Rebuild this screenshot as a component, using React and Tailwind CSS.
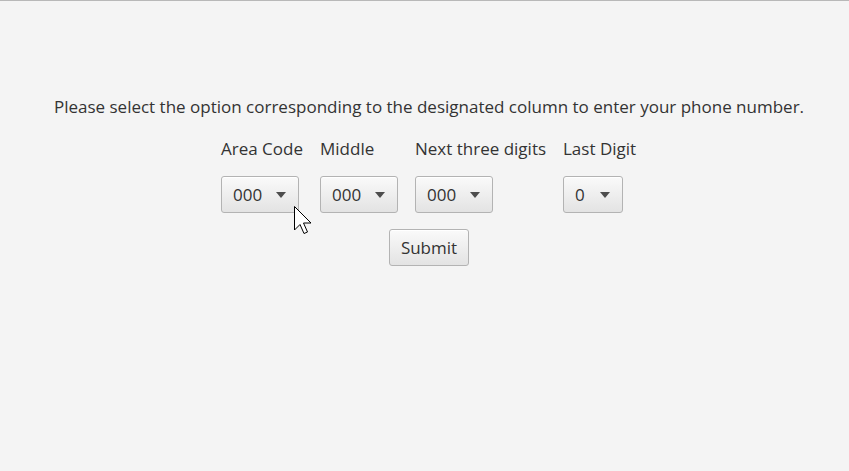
import { useState } from "react";

const columns = [
  { label: "Area Code", options: ["000", "111", "222"], width: "w-[78px]" },
  { label: "Middle", options: ["000", "111", "222"], width: "w-[78px]" },
  { label: "Next three digits", options: ["000", "111", "222"], width: "w-[78px]" },
  { label: "Last Digit", options: ["0", "1", "2"], width: "w-[60px]" },
];

function Combo({ value, width }) {
  return (
    <button
      className={`${width} h-[37px] flex items-center justify-between pl-[11px] pr-[12px] rounded-[3px] border border-[#b3b3b3] bg-gradient-to-b from-[#fafafa] to-[#e3e3e3] shadow-[inset_0_1px_0_#ffffff] text-[17px] text-[#333333]`}
    >
      <span>{value}</span>
      <svg width="10" height="6" viewBox="0 0 10 6">
        <path d="M0 0 L10 0 L5 6 Z" fill="#4d4d4d" />
      </svg>
    </button>
  );
}

export default function App() {
  const [values] = useState(columns.map((c) => c.options[0]));

  return (
    <div className="relative min-h-[471px] bg-[#f4f4f4] border-t border-[#b8b8b8] font-['Open_Sans','Noto_Sans',sans-serif] text-[#333333]">
      <div className="flex flex-col items-center pt-[95px] pl-[9px]">
        <p className="text-[17px] leading-[22px] whitespace-nowrap">
          Please select the option corresponding to the designated column to enter your phone number.
        </p>

        <div className="grid grid-cols-[82px_78px_131px_74px] gap-x-[17px] mt-[20px]">
          {columns.map((c) => (
            <span key={c.label} className="text-[17px] leading-[22px] whitespace-nowrap">
              {c.label}
            </span>
          ))}
          {columns.map((c, i) => (
            <div key={c.label + "-combo"} className="mt-[16px]">
              <Combo value={values[i]} width={c.width} />
            </div>
          ))}
        </div>

        <button className="mt-[16px] w-[80px] h-[37px] rounded-[3px] border border-[#b3b3b3] bg-gradient-to-b from-[#fafafa] to-[#e3e3e3] shadow-[inset_0_1px_0_#ffffff] text-[17px] text-[#333333]">
          Submit
        </button>
      </div>

      {/* mouse pointer in the capture */}
      <svg
        className="absolute left-[294px] top-[205px]"
        width="19"
        height="30"
        viewBox="0 0 19 30"
      >
        <path
          d="M0.5 0.5 L0.5 24 L6 18.5 L10 27.5 L13.5 26 L9.5 17 L17 17 Z"
          fill="#ffffff"
          stroke="#000000"
          strokeWidth="1"
          strokeLinejoin="miter"
        />
      </svg>
    </div>
  );
}
